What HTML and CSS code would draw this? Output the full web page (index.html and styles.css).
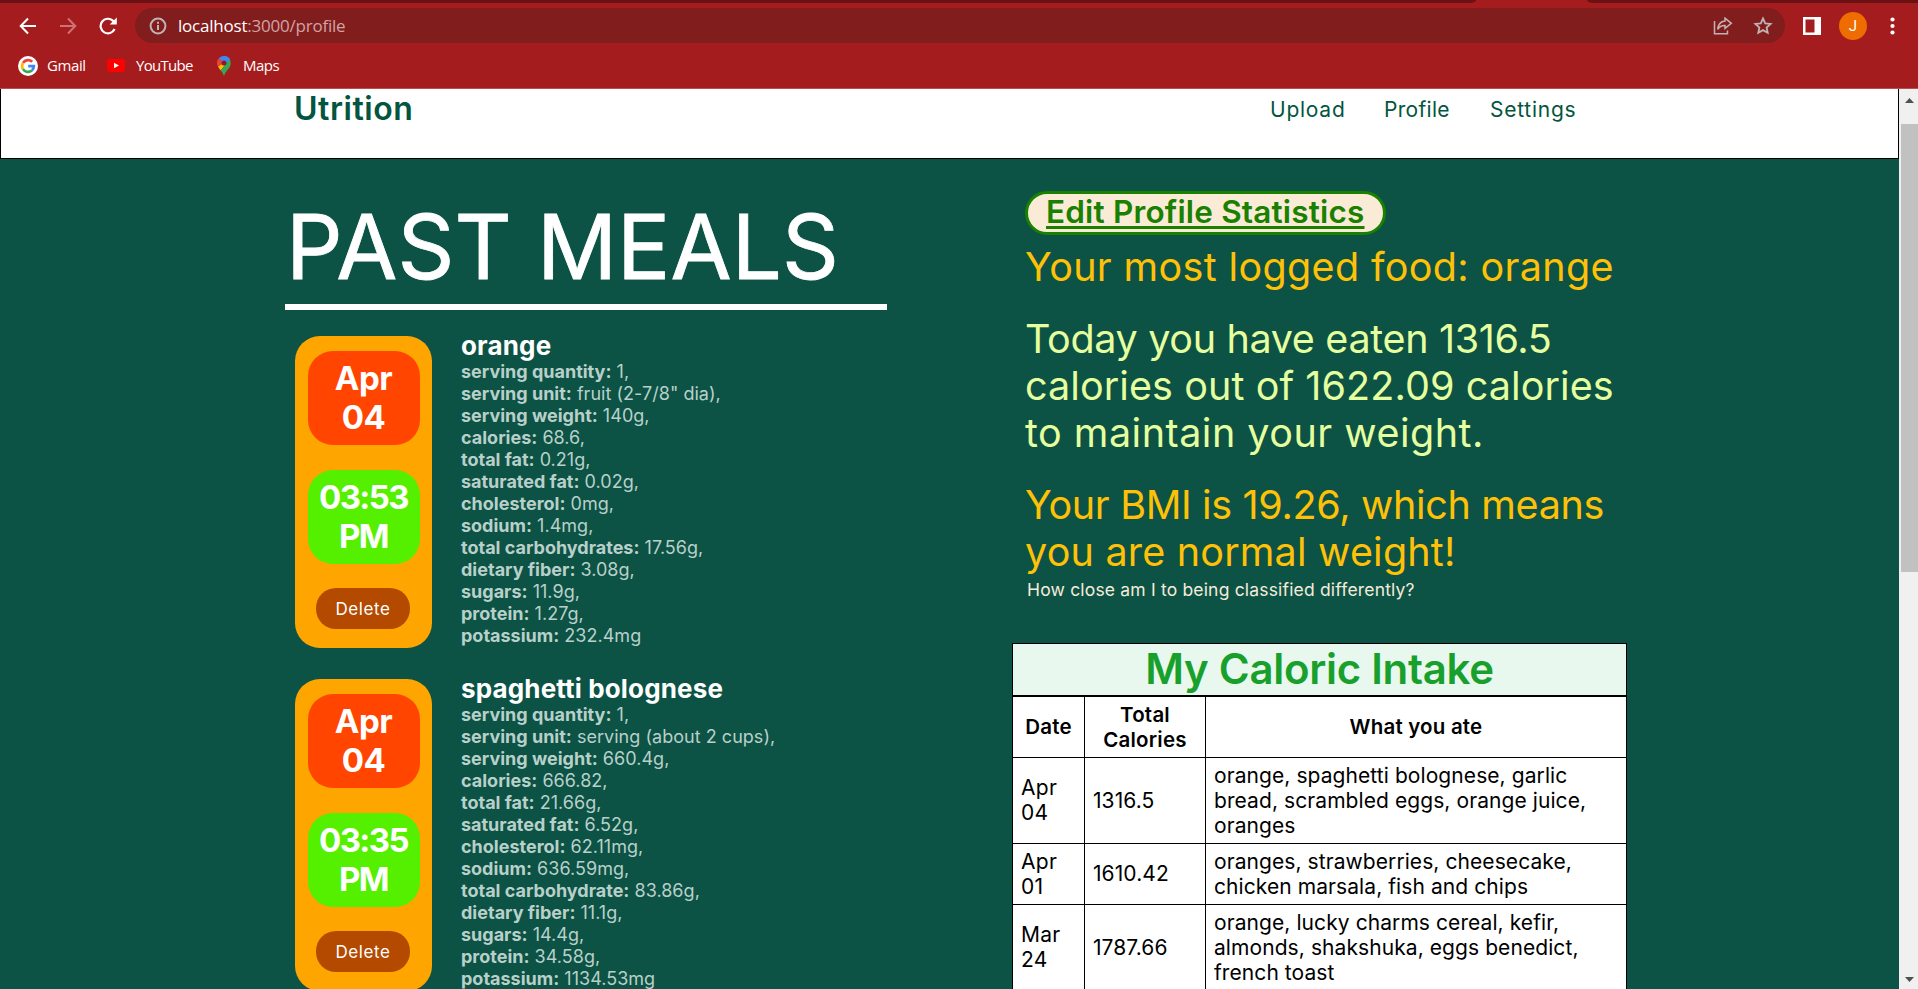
FILE: index.html
```html
<!DOCTYPE html>
<html lang="en">
<head>
<meta charset="utf-8">
<title>Utrition</title>
<link rel="stylesheet" href="styles.css">
</head>
<body>
<div class="browser">
  <div class="tabstrip"><div class="tabs-left"></div><div class="tabs-right"></div></div>
  <div class="toolbar">
    <svg class="nav-icon" width="18" height="18" viewBox="0 0 18 18" fill="none" stroke="#fff" stroke-width="2"><path d="M17 9H2M9 1.5L1.7 9L9 16.5"/></svg>
    <svg class="nav-icon" width="18" height="18" viewBox="0 0 18 18" fill="none" stroke="#ce7273" stroke-width="2"><path d="M1 9H16M9 1.5L16.300 9L9 16.5"/></svg>
    <svg class="nav-icon" width="18" height="18" viewBox="0 0 18 18"><path d="M15.600 12A7.300 7.300 0 1 1 13.800 3.600L15.300 5" fill="none" stroke="#fff" stroke-width="2.200"/><path d="M17.800 0.500V7.600H10.700Z" fill="#fff"/></svg>
    <div class="address">
      <svg width="18" height="18" viewBox="0 0 18 18" fill="none" stroke="#c2b2b2" stroke-width="2"><circle cx="9" cy="9" r="7.400"/><path d="M9 8V13M9 4.700V6.700"/></svg>
      <span class="url"><span class="host">localhost</span>:3000/profile</span>
      <svg class="share" width="20" height="18" viewBox="0 0 20 18" fill="none" stroke="#c2b2b2" stroke-width="1.500"><path d="M1.500 4V16.700H14.500V13.500"/><path d="M12 1.200L18.300 6.300L12 11.400V8.500C8.500 8.300 6.500 9.700 4.700 12.300C5.200 8 7.500 4.600 12 4.100Z"/></svg>
      <svg class="star" width="20" height="19" viewBox="0 0 20 19" fill="none" stroke="#c2b2b2" stroke-width="1.800"><path d="M10 2.400L12.200 7.300L17.600 7.900L13.600 11.500L14.700 16.800L10 14.100L5.300 16.800L6.400 11.500L2.400 7.900L7.800 7.300Z"/></svg>
    </div>
    <svg class="panel" width="18" height="18" viewBox="0 0 18 18"><path fill="#fff" fill-rule="evenodd" d="M0 0H18V18H0ZM2.500 2.500V15.500H11.500V2.500Z"/></svg>
    <div class="avatar">J</div>
    <svg class="dots" width="5" height="18" viewBox="0 0 5 18" fill="#fff"><circle cx="2.500" cy="2.500" r="2.100"/><circle cx="2.500" cy="9" r="2.100"/><circle cx="2.500" cy="15.500" r="2.100"/></svg>
  </div>
  <div class="bookmarks">
    <svg width="20" height="20" viewBox="0 0 20 20"><circle cx="10" cy="10" r="10" fill="#fff"/><g fill="none" stroke-width="2.700"><path d="M5 6.900A5.900 5.900 0 0 1 14.200 5.800" stroke="#ea4335"/><path d="M5 13.100A5.900 5.900 0 0 1 5 6.900" stroke="#fbbc05"/><path d="M13.900 14.400A5.900 5.900 0 0 1 5 13.100" stroke="#34a853"/><path d="M10.200 10.100H15.900C15.900 12 15.200 13.400 13.900 14.400" stroke="#4285f4"/></g></svg>
    <span class="bm gmail">Gmail</span>
    <svg width="18" height="13" viewBox="0 0 18 13"><rect width="18" height="13" rx="3" fill="#f00"/><path d="M7 3.800L12 6.500L7 9.200Z" fill="#fff"/></svg>
    <span class="bm youtube">YouTube</span>
    <svg width="14" height="20" viewBox="0 0 14 20"><path d="M7 0A7 7 0 0 0 1.700 2.400L7 7L11.500 1.600A7 7 0 0 0 7 0Z" fill="#4285f4"/><path d="M1.700 2.400A7 7 0 0 0 1 10.500L7 7Z" fill="#ea4335"/><path d="M1 10.500Q2 12.500 3.800 14.500L11 5L7 7Z" fill="#fbbc04"/><path d="M3.800 14.500Q6 17 7 20Q8 16.500 11 13.200C14 10 15 6 11.500 1.600L8.500 8.500Z" fill="#34a853"/><path d="M7 0A7 7 0 0 1 13 3.300L9.500 7L7 4.500L4.500 2Z" fill="#4285f4"/><circle cx="7" cy="7" r="2.500" fill="#8e1c20"/></svg>
    <span class="bm maps">Maps</span>
  </div>
</div>
<div class="viewport">
  <div class="page">
    <header class="header">
      <div class="brand">Utrition</div>
      <nav class="nav"><a class="n-upload">Upload</a><a class="n-profile">Profile</a><a class="n-settings">Settings</a></nav>
    </header>
    <main class="main">
      <section class="meals">
        <h1 class="title">PAST MEALS</h1>
        <article class="meal">
          <div class="card"><div class="date">Apr<br>04</div><div class="time">03:53<br>PM</div><button class="delete">Delete</button></div>
          <div class="info">
            <h2 class="food">orange</h2>
            <ul class="facts">
              <li><b>serving quantity:</b> 1,</li>
              <li><b>serving unit:</b> fruit (2-7/8" dia),</li>
              <li><b>serving weight:</b> 140g,</li>
              <li><b>calories:</b> 68.6,</li>
              <li><b>total fat:</b> 0.21g,</li>
              <li><b>saturated fat:</b> 0.02g,</li>
              <li><b>cholesterol:</b> 0mg,</li>
              <li><b>sodium:</b> 1.4mg,</li>
              <li><b>total carbohydrates:</b> 17.56g,</li>
              <li><b>dietary fiber:</b> 3.08g,</li>
              <li><b>sugars:</b> 11.9g,</li>
              <li><b>protein:</b> 1.27g,</li>
              <li><b>potassium:</b> 232.4mg</li>
            </ul>
          </div>
        </article>
        <article class="meal">
          <div class="card"><div class="date">Apr<br>04</div><div class="time">03:35<br>PM</div><button class="delete">Delete</button></div>
          <div class="info">
            <h2 class="food">spaghetti bolognese</h2>
            <ul class="facts">
              <li><b>serving quantity:</b> 1,</li>
              <li><b>serving unit:</b> serving (about 2 cups),</li>
              <li><b>serving weight:</b> 660.4g,</li>
              <li><b>calories:</b> 666.82,</li>
              <li><b>total fat:</b> 21.66g,</li>
              <li><b>saturated fat:</b> 6.52g,</li>
              <li><b>cholesterol:</b> 62.11mg,</li>
              <li><b>sodium:</b> 636.59mg,</li>
              <li><b>total carbohydrate:</b> 83.86g,</li>
              <li><b>dietary fiber:</b> 11.1g,</li>
              <li><b>sugars:</b> 14.4g,</li>
              <li><b>protein:</b> 34.58g,</li>
              <li><b>potassium:</b> 1134.53mg</li>
            </ul>
          </div>
        </article>
      </section>
      <section class="side">
        <div class="stats">
          <a class="edit">Edit Profile Statistics</a>
          <p class="gold t-wide">Your most logged food: orange</p>
          <p class="lime"><span class="t-snug">Today you have eaten 1316.5</span><br><span class="t-mid">calories out of 1622.09 calories</span><br><span class="t-wider">to maintain your weight.</span></p>
          <p class="gold"><span class="t-snug">Your BMI is 19.26, which means</span><br><span class="t-loose">you are normal weight!</span></p>
          <a class="how">How close am I to being classified differently?</a>
        </div>
        <table class="intake">
          <colgroup><col class="c-date"><col class="c-total"><col></colgroup>
          <tr class="cap"><th colspan="3">My Caloric Intake</th></tr>
          <tr class="short"><th>Date</th><th>Total<br>Calories</th><th>What you ate</th></tr>
          <tr class="tall"><td class="day">Apr<br>04</td><td>1316.5</td><td>orange, spaghetti bolognese, garlic<br>bread, scrambled eggs, orange juice,<br>oranges</td></tr>
          <tr class="short"><td class="day">Apr<br>01</td><td>1610.42</td><td>oranges, strawberries, cheesecake,<br>chicken marsala, fish and chips</td></tr>
          <tr class="tall"><td class="day">Mar<br>24</td><td>1787.66</td><td>orange, lucky charms cereal, kefir,<br>almonds, shakshuka, eggs benedict,<br>french toast</td></tr>
        </table>
      </section>
    </main>
  </div>
  <div class="scrollbar">
    <svg width="17" height="35" viewBox="0 0 17 35"><path d="M4 14H13L8.500 9Z" fill="#505050"/></svg>
    <div class="thumb"></div>
    <svg class="down" width="17" height="17" viewBox="0 0 17 17"><path d="M4 5H13L8.500 10Z" fill="#505050"/></svg>
  </div>
</div>
</body>
</html>
```
FILE: styles.css
```css
* { box-sizing: border-box; }
body {
  margin: 0; width: 1918px; height: 989px; overflow: hidden;
  display: flex; flex-direction: column;
  font-family: Inter, "Liberation Sans", sans-serif; color: #000;
}
svg { display: block; flex: none; }

.browser {
  height: 89px; flex: none; background: #a51c1e;
  border-bottom: 1px solid #b84f50;
  font-family: "Open Sans", "Noto Sans", sans-serif;
}
.tabstrip { height: 3px; display: flex; justify-content: space-between; }
.tabs-left { width: 1476px; background: #6b1013; border-bottom-right-radius: 6px 3px; }
.tabs-right { width: 331px; background: #6b1013; border-bottom-left-radius: 6px 3px; }
.toolbar { height: 45px; padding: 0 23px 0 19px; display: flex; align-items: center; }
.nav-icon { margin-right: 22px; }
.nav-icon:nth-child(3) { margin-right: 18px; }
.address {
  width: 1650px; height: 35px; border-radius: 18px; background: #821d1e;
  display: flex; align-items: center; padding: 0 12px 0 14px;
}
.url { margin-left: 11px; font-size: 17px; letter-spacing: -0.22px; line-height: 24px; color: #d0a3a4; }
.host { color: #fff; }
.share { margin-left: auto; }
.star { margin-left: 20px; }
.panel { margin-left: 18px; }
.avatar {
  margin-left: 18px; width: 28px; height: 28px; border-radius: 50%; background: #ef6c00;
  color: #fff; font: 15px/28px Roboto, sans-serif; text-align: center;
}
.dots { margin-left: 23px; }
.bookmarks { height: 35px; padding-left: 18px; display: flex; align-items: center; }
.bm { color: #fff; font-size: 15px; letter-spacing: -0.5px; line-height: 20px; margin-top: -2px; }
.gmail { margin-left: 9px; width: 60px; letter-spacing: -0.4px; }
.youtube { margin-left: 11px; width: 81px; letter-spacing: -0.7px; }
.maps { margin-left: 12px; }

.viewport { flex: 1; display: flex; min-height: 0; }
.page { width: 1899px; height: 900px; overflow: hidden; background: #0c5345; }
.header {
  height: 70px; background: #fff; border: 1px solid #000; border-top: 0;
  padding: 1px 323px 0 293px; display: flex; justify-content: space-between; align-items: flex-start;
  color: #04553f;
}
.brand { font-size: 32px; font-weight: 600; letter-spacing: 0.55px; line-height: 37px; }
.nav { display: flex; font-size: 21px; line-height: 39px; }
.n-upload { width: 114px; letter-spacing: 0.75px; }
.n-profile { width: 106px; letter-spacing: 0.3px; }
.n-settings { width: 85px; letter-spacing: 0.75px; white-space: nowrap; }

.main { display: flex; padding: 32px 0 0 285px; }
.meals { width: 602px; }
.title {
  margin: 0 0 26px; height: 119px; padding-left: 1px; border-bottom: 6px solid #fff;
  font-size: 88.7px; font-weight: 400; letter-spacing: 0.1px; line-height: 112px; color: #fff;
  -webkit-text-stroke: 0.8px #fff;
}
.meal { display: flex; padding-left: 10px; margin-bottom: 31px; }
.card {
  width: 137px; height: 312px; border-radius: 25px; background: orange; padding-top: 15px;
  display: flex; flex-direction: column; align-items: center; gap: 24.500px;
}
.date, .time {
  width: 112px; height: 94px; padding-top: 8px; border-radius: 25px;
  font-size: 33px; font-weight: 700; letter-spacing: -0.5px; line-height: 39px;
  text-align: center; color: #fff; background: #ff4500;
}
.time { background: #54f000; letter-spacing: -1.600px; }
.delete {
  width: 94px; height: 41px; border: 0; border-radius: 20px; padding: 0; background: #b34a00;
  margin-right: 1px; font: 400 17px Inter, sans-serif; letter-spacing: 0.6px; color: #fff;
}
.info { margin-left: 29px; }
.food { margin: 0 0 5px; font-size: 26px; font-weight: 700; letter-spacing: 0.15px; line-height: 20px; color: #fff; white-space: nowrap; }
.facts { margin: 0; padding: 0; list-style: none; font-size: 18px; letter-spacing: 0.03px; line-height: 22px; color: #b9d0ca; white-space: nowrap; }
.facts b { letter-spacing: 0; }

.side { width: 615px; margin-left: 125px; }
.stats { padding-left: 13px; height: 452px; display: flex; flex-direction: column; align-items: flex-start; white-space: nowrap; }
.edit {
  width: 361px; height: 44px; border: 3px solid #198000; border-radius: 22px; background: #faebd7;
  padding-left: 18px; font-size: 31.500px; font-weight: 600; letter-spacing: 0.18px; line-height: 36px; color: #198000;
  text-decoration: underline; text-decoration-thickness: 3px; text-underline-offset: 3px; text-decoration-skip-ink: none;
}
.gold, .lime { margin: 0 0 25px; font-size: 39.500px; line-height: 47px; color: #ffc107; }
.edit + .gold { margin-top: 9px; }
.lime { color: #e6ff9f; }
.t-snug { letter-spacing: -0.33px; }
.t-mid { letter-spacing: 0.09px; }
.t-loose { letter-spacing: 0.2px; }
.t-wide { letter-spacing: 0.35px; }
.t-wider { letter-spacing: 0.5px; }
.lime + .gold { margin-bottom: 4px; }
.how { padding-left: 2px; font-size: 17.500px; font-weight: 400; letter-spacing: 0.18px; line-height: 20px; color: #f5ebdb; }

.intake {
  width: 615px; table-layout: fixed; border-spacing: 0; background: #fff;
  border-left: 1px solid #000; border-top: 1px solid #000;
  font-size: 21px; line-height: 25px; letter-spacing: 0.08px; white-space: nowrap;
}
.c-date { width: 72px; }
.c-total { width: 121px; }
.intake th, .intake td { padding: 0 0 1px; border-right: 1px solid #000; border-bottom: 1px solid #000; }
.intake th { font-size: 20.500px; font-weight: 600; letter-spacing: 0.2px; }
.intake td { padding-left: 8px; }
.intake .day { letter-spacing: 0.3px; }
.cap { height: 53px; }
.intake .cap th {
  background: #e8f8ef; color: #19a02c; border-bottom-width: 2px;
  font-size: 42px; line-height: 48px; letter-spacing: -0.28px;
}
.short { height: 61px; }
.tall { height: 86px; }

.scrollbar { width: 19px; padding-left: 2px; background: #f0f0f0; display: flex; flex-direction: column; }
.thumb { height: 448px; background: #c1c1c1; }
.down { margin-top: auto; }
```
